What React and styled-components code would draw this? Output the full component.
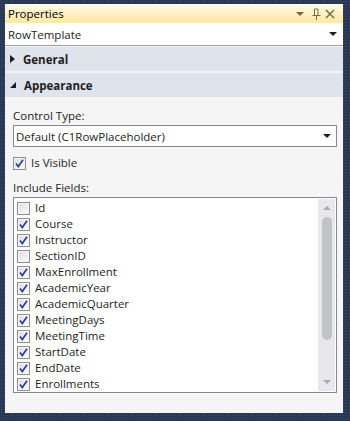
import React, { useState } from 'react';
import styled, { createGlobalStyle } from 'styled-components';

const GlobalStyle = createGlobalStyle`
  body {
    margin: 0;
    background-color: #293955;
    background-image: radial-gradient(#3b4c6b 0.8px, transparent 0.9px);
    background-size: 3px 3px;
    font-family: "Segoe UI", "Open Sans", sans-serif;
    font-size: 11.5px;
    color: #1e1e1e;
  }
`;

const Page = styled.div`
  width: 350px;
  height: 421px;
  padding: 4px 7px 0 5px;
  box-sizing: border-box;
`;

const Panel = styled.div`
  width: 338px;
  height: 409px;
  display: flex;
  flex-direction: column;
  background: #f5f5f5;
`;

const TitleBar = styled.div`
  height: 19px;
  display: flex;
  align-items: center;
  padding: 0 8px 0 3px;
  background: linear-gradient(#fffbe9, #fff1c4 50%, #ffe8a6);
  color: #000;
`;

const Title = styled.span`
  flex: 1;
`;

const ToolIcons = styled.div`
  display: flex;
  align-items: center;
  gap: 3px;
`;

const ObjectCombo = styled.div`
  height: 22px;
  display: flex;
  align-items: center;
  padding: 0 6px 0 3px;
  background: #fff;
  border-bottom: 1px solid #9ba0aa;
`;

const ComboText = styled.span`
  flex: 1;
`;

const Category = styled.div`
  height: 24px;
  display: flex;
  align-items: center;
  gap: 8px;
  padding-left: 5px;
  background: #dfe3ec;
  font-weight: bold;
  margin-top: ${p => (p.$first ? '1px' : '2px')};
`;

const Content = styled.div`
  padding: 11px 6px 0 8px;
  display: flex;
  flex-direction: column;
`;

const Label = styled.div`
  line-height: 16px;
  margin-bottom: 1px;
`;

const DropDown = styled.div`
  height: 20px;
  display: flex;
  align-items: center;
  padding: 0 5px 0 2px;
  background: #fff;
  border: 1px solid #828790;
`;

const CheckRow = styled.label`
  display: flex;
  align-items: center;
  gap: 5px;
  height: 16px;
  line-height: 16px;
  margin: ${p => (p.$spaced ? '8px 0 9px 0' : '0')};
`;

const Box = styled.span`
  width: 11px;
  height: 11px;
  flex: none;
  border: 1px solid #8e8f8f;
  background: linear-gradient(135deg, #dcdcdc, #f4f4f4 70%, #fff);
  box-shadow: inset 0 0 0 1px #f4f4f4;
  display: flex;
  align-items: center;
  justify-content: center;
`;

const ListBox = styled.div`
  height: 194px;
  border: 1px solid #828790;
  background: #fff;
  display: flex;
  overflow: hidden;
`;

const Items = styled.div`
  flex: 1;
  padding: 2px 0 0 3px;
`;

const ScrollTrack = styled.div`
  width: 17px;
  margin: 1px 1px 1px 0;
  background: #e8e8ec;
  display: flex;
  flex-direction: column;
  align-items: center;
`;

const ScrollArrow = styled.div`
  height: 18px;
  display: flex;
  align-items: center;
  justify-content: center;
`;

const Thumb = styled.div`
  width: 10px;
  height: 123px;
  border-radius: 5px;
  background: #c2c3c9;
`;

const Spacer = styled.div`
  flex: 1;
`;

const Check = () => (
  <svg width="9" height="9" viewBox="0 0 9 9">
    <path d="M1 4.5 L3.3 7.5 L8 0.8" fill="none" stroke="#2c3c9c" strokeWidth="1.7" />
  </svg>
);

const CheckBox = ({ checked }) => <Box>{checked && <Check />}</Box>;

const DownArrow = ({ color = '#1e1e1e' }) => (
  <svg width="8" height="4" viewBox="0 0 8 4">
    <path d="M0 0 H8 L4 4 Z" fill={color} />
  </svg>
);

const fields = [
  ['Id', false],
  ['Course', true],
  ['Instructor', true],
  ['SectionID', false],
  ['MaxEnrollment', true],
  ['AcademicYear', true],
  ['AcademicQuarter', true],
  ['MeetingDays', true],
  ['MeetingTime', true],
  ['StartDate', true],
  ['EndDate', true],
  ['Enrollments', true],
];

export default function App() {
  const [items] = useState(fields);
  return (
    <Page>
      <GlobalStyle />
      <Panel>
        <TitleBar>
          <Title>Properties</Title>
          <ToolIcons>
            <DownArrow color="#7a6a3e" />
            <svg width="9" height="12" viewBox="0 0 9 12" style={{ marginLeft: 5 }}>
              <path d="M2.5 1 V7 M6 1 V7 M2.5 1 H6 M0.5 7.5 H8.5 M4.5 8 V12" stroke="#7a6a3e" strokeWidth="1" fill="none" />
            </svg>
            <svg width="10" height="10" viewBox="0 0 10 10" style={{ marginLeft: 1 }}>
              <path d="M1 1 L9 9 M9 1 L1 9" stroke="#7a6a3e" strokeWidth="1.5" />
            </svg>
          </ToolIcons>
        </TitleBar>
        <ObjectCombo>
          <ComboText>RowTemplate</ComboText>
          <DownArrow />
        </ObjectCombo>
        <Category $first>
          <svg width="5" height="8" viewBox="0 0 5 8">
            <path d="M0 0 L5 4 L0 8 Z" fill="#1e1e1e" />
          </svg>
          General
        </Category>
        <Category>
          <svg width="6" height="6" viewBox="0 0 6 6">
            <path d="M6 0 V6 H0 Z" fill="#1e1e1e" />
          </svg>
          Appearance
        </Category>
        <Content>
          <Label>Control Type:</Label>
          <DropDown>
            <ComboText>Default (C1RowPlaceholder)</ComboText>
            <DownArrow />
          </DropDown>
          <CheckRow $spaced>
            <CheckBox checked />
            Is Visible
          </CheckRow>
          <Label>Include Fields:</Label>
          <ListBox>
            <Items>
              {items.map(([name, on]) => (
                <CheckRow key={name}>
                  <CheckBox checked={on} />
                  {name}
                </CheckRow>
              ))}
            </Items>
            <ScrollTrack>
              <ScrollArrow>
                <svg width="8" height="4" viewBox="0 0 8 4">
                  <path d="M0 4 H8 L4 0 Z" fill="#a8a8ad" />
                </svg>
              </ScrollArrow>
              <Thumb />
              <Spacer />
              <ScrollArrow>
                <DownArrow color="#a8a8ad" />
              </ScrollArrow>
            </ScrollTrack>
          </ListBox>
        </Content>
      </Panel>
    </Page>
  );
}
